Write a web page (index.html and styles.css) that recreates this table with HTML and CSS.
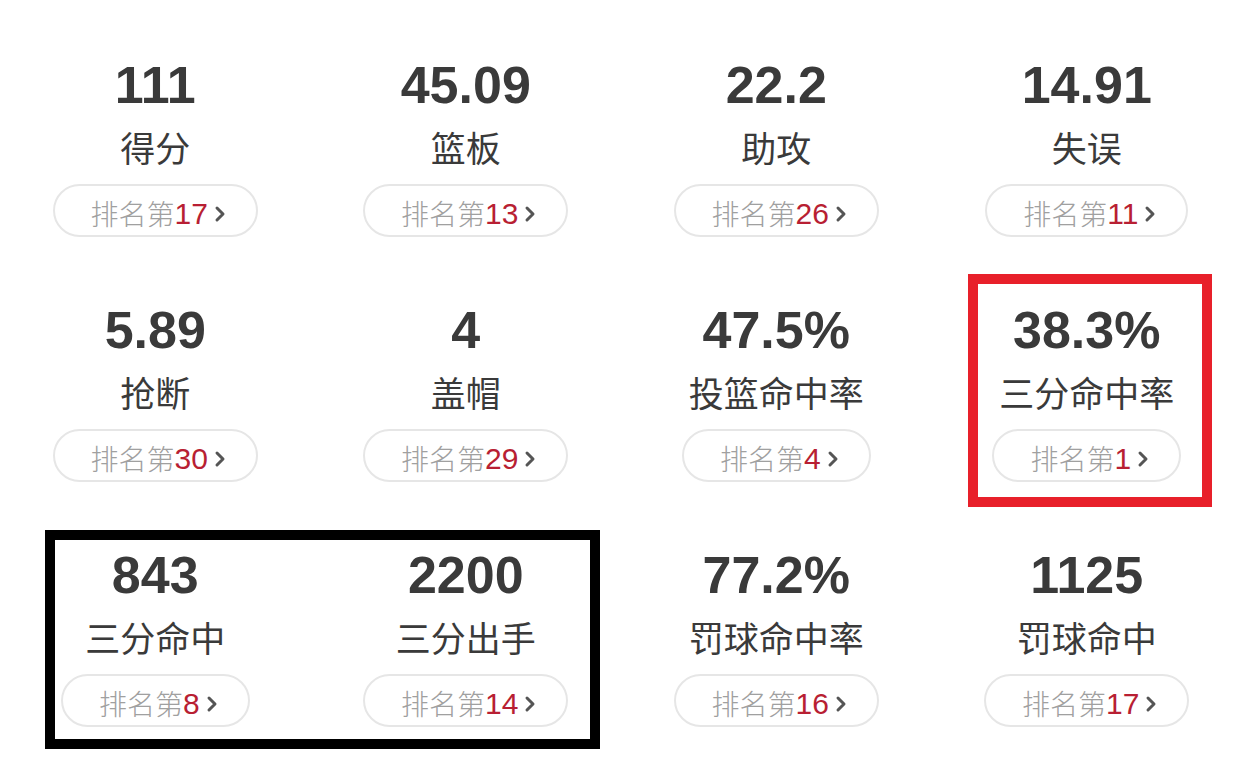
FILE: index.html
```html
<!DOCTYPE html>
<html lang="zh-CN">
<head>
<meta charset="utf-8">
<title>球队数据</title>
<link rel="stylesheet" href="styles.css">
</head>
<body>
<main class="stats">
  <div class="cell"><div class="num">111</div><div class="label">得分</div><a class="rank">排名第<b>17</b><svg class="chev" viewBox="0 0 12 18"><path d="M3 3l6 6-6 6"/></svg></a></div>
  <div class="cell"><div class="num">45.09</div><div class="label">篮板</div><a class="rank">排名第<b>13</b><svg class="chev" viewBox="0 0 12 18"><path d="M3 3l6 6-6 6"/></svg></a></div>
  <div class="cell"><div class="num">22.2</div><div class="label">助攻</div><a class="rank">排名第<b>26</b><svg class="chev" viewBox="0 0 12 18"><path d="M3 3l6 6-6 6"/></svg></a></div>
  <div class="cell"><div class="num">14.91</div><div class="label">失误</div><a class="rank">排名第<b>11</b><svg class="chev" viewBox="0 0 12 18"><path d="M3 3l6 6-6 6"/></svg></a></div>

  <div class="cell"><div class="num">5.89</div><div class="label">抢断</div><a class="rank">排名第<b>30</b><svg class="chev" viewBox="0 0 12 18"><path d="M3 3l6 6-6 6"/></svg></a></div>
  <div class="cell"><div class="num">4</div><div class="label">盖帽</div><a class="rank">排名第<b>29</b><svg class="chev" viewBox="0 0 12 18"><path d="M3 3l6 6-6 6"/></svg></a></div>
  <div class="cell"><div class="num">47.5%</div><div class="label">投篮命中率</div><a class="rank">排名第<b>4</b><svg class="chev" viewBox="0 0 12 18"><path d="M3 3l6 6-6 6"/></svg></a></div>
  <div class="cell"><div class="num">38.3%</div><div class="label">三分命中率</div><a class="rank">排名第<b>1</b><svg class="chev" viewBox="0 0 12 18"><path d="M3 3l6 6-6 6"/></svg></a></div>

  <div class="cell"><div class="num">843</div><div class="label">三分命中</div><a class="rank">排名第<b>8</b><svg class="chev" viewBox="0 0 12 18"><path d="M3 3l6 6-6 6"/></svg></a></div>
  <div class="cell"><div class="num">2200</div><div class="label">三分出手</div><a class="rank">排名第<b>14</b><svg class="chev" viewBox="0 0 12 18"><path d="M3 3l6 6-6 6"/></svg></a></div>
  <div class="cell"><div class="num">77.2%</div><div class="label">罚球命中率</div><a class="rank">排名第<b>16</b><svg class="chev" viewBox="0 0 12 18"><path d="M3 3l6 6-6 6"/></svg></a></div>
  <div class="cell"><div class="num">1125</div><div class="label">罚球命中</div><a class="rank">排名第<b>17</b><svg class="chev" viewBox="0 0 12 18"><path d="M3 3l6 6-6 6"/></svg></a></div>
</main>
<div class="mark mark-red"></div>
<div class="mark mark-black"></div>
</body>
</html>
```

FILE: styles.css
```css
html, body {
  margin: 0;
  padding: 0;
  background: #fff;
}
body {
  width: 1242px;
  height: 770px;
  overflow: hidden;
  position: relative;
  font-family: "Noto Sans CJK SC", "Noto Sans", sans-serif;
  color: #333;
}
.stats {
  display: grid;
  grid-template-columns: repeat(4, 1fr);
  grid-auto-rows: 245px;
  padding-top: 55px;
}
.cell {
  display: flex;
  flex-direction: column;
  align-items: center;
}
.num {
  font-family: "Liberation Sans", Arial, sans-serif;
  font-weight: 700;
  font-size: 52px;
  line-height: 60px;
  color: #3a3a3a;
}
.label {
  margin-top: 8px;
  font-size: 35px;
  line-height: 48px;
  color: #3a3a3a;
}
.rank {
  margin-top: 13px;
  height: 53px;
  box-sizing: border-box;
  border: 2px solid #e6e6e6;
  border-radius: 27px;
  padding: 4px 30px 0 36px;
  display: flex;
  align-items: center;
  font-size: 28px;
  line-height: 1;
  color: #a0a0a0;
  font-weight: 300;
}
.rank b {
  font-family: "Liberation Sans", Arial, sans-serif;
  font-weight: 400;
  font-size: 30px;
  color: #b81f33;
  padding-top: 3px;
}
.chev {
  width: 12px;
  height: 18px;
  margin-left: 6px;
  margin-top: 3px;
  fill: none;
  stroke: #555;
  stroke-width: 3;
  stroke-linecap: round;
  stroke-linejoin: round;
}
.mark {
  position: absolute;
  box-sizing: border-box;
  border: 10px solid;
}
.mark-red {
  left: 968px;
  top: 274px;
  width: 244px;
  height: 233px;
  border-color: #e8202a;
}
.mark-black {
  left: 45px;
  top: 530px;
  width: 555px;
  height: 219px;
  border-color: #000;
}
```
